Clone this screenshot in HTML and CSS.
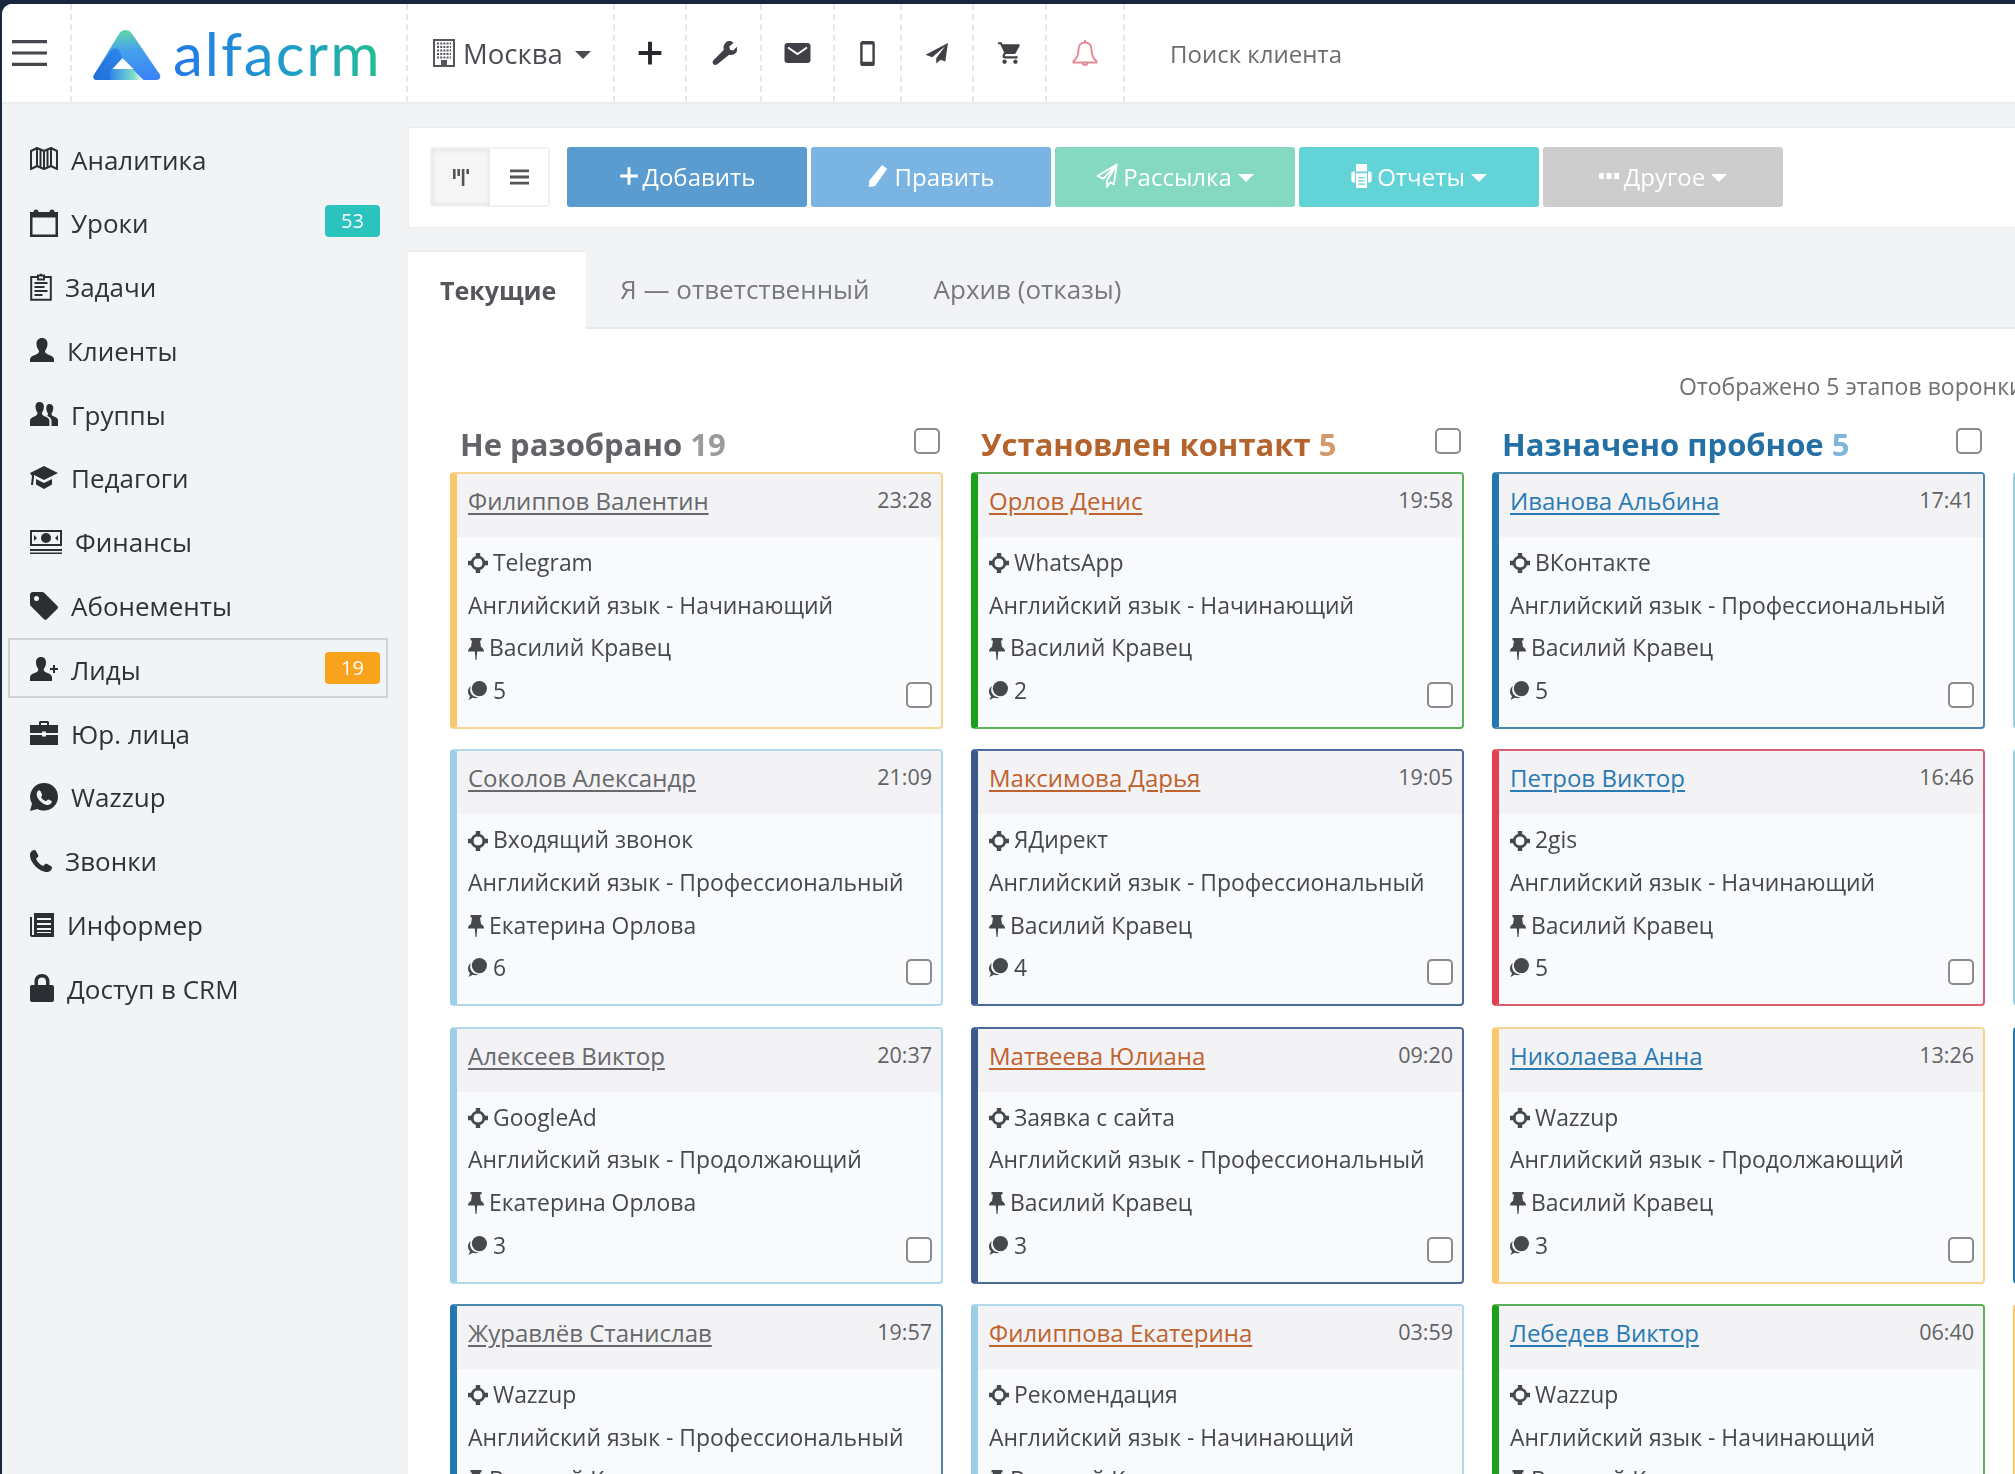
FILE: index.html
```html
<!DOCTYPE html>
<html lang="ru">
<head>
<meta charset="utf-8">
<title>alfacrm — Лиды</title>
<link rel="stylesheet" href="styles.css">
</head>
<body>
<svg class="sprite" aria-hidden="true">
<defs>
<symbol id="i-plus" viewBox="0 0 24 24"><path d="M10.2 1.5h3.6v8.7h8.7v3.6h-8.7v8.7h-3.6v-8.7H1.5v-3.6h8.7z"/></symbol>
<symbol id="i-wrench" viewBox="0 0 24 24"><path d="M15.6 1.2c2.1-.6 4.300 0 5.700 1.300l-3.900 3.600.6 3 2.900.6 3.700-3.700c.7 2.400.1 4.700-1.600 6.300-1.700 1.500-3.800 1.900-5.800 1.200L6.300 22.300c-1 1-2.600 1-3.600.1-1-1-1-2.600 0-3.600l9.700-9.800c-.8-2-.4-4.300 1.100-5.900.6-.9 1.300-1.600 2.100-1.900z"/></symbol>
<symbol id="i-mail" viewBox="0 0 26 20"><rect width="26" height="20" rx="3"/><path d="M3.500 4.500 13 11l9.500-6.500" fill="none" stroke="#fff" stroke-width="2"/></symbol>
<symbol id="i-mobile" viewBox="0 0 14 24"><path fill-rule="evenodd" d="M2.500 0h9A2.500 2.500 0 0 1 14 2.500v19a2.500 2.500 0 0 1-2.500 2.500h-9A2.500 2.500 0 0 1 0 21.500v-19A2.500 2.500 0 0 1 2.500 0zM2.300 3.300v16.500h9.400V3.300z"/></symbol>
<symbol id="i-send" viewBox="0 0 24 22"><path d="M23.500 0 0 12.200l7 2.600L20.500 3.500 11.200 16l0 5.500 4.500-4 5 2z"/></symbol>
<symbol id="i-cart" viewBox="0 0 24 24"><path d="M7 18c-1.100 0-2 .9-2 2s.9 2 2 2 2-.9 2-2-.9-2-2-2zM1 2v2h2l3.600 7.600-1.350 2.450c-.16.28-.25.61-.25.95 0 1.100.9 2 2 2h12v-2H7.420c-.14 0-.25-.11-.25-.25l.03-.12.9-1.630h7.450c.75 0 1.410-.41 1.750-1.030l3.580-6.490c.08-.14.12-.31.12-.48 0-.55-.45-1-1-1H5.210l-.94-2H1zm16 16c-1.100 0-2 .9-2 2s.9 2 2 2 2-.9 2-2-.9-2-2-2z"/></symbol>
<symbol id="i-bell" viewBox="0 0 26 28"><path d="M13 3.500c-4 0-6.500 3-6.500 7 0 6-1.500 9-5 11.500v1.500h23V22c-3.500-2.500-5-5.500-5-11.500 0-4-2.500-7-6.500-7zM13 1v2.500M10.500 23.500c0 3.500 5 3.500 5 0" fill="none" stroke="currentColor" stroke-width="1.900"/></symbol>
<symbol id="i-building" viewBox="0 0 22 28"><path fill-rule="evenodd" d="M0 0h22v28H0zM2 2v24h6v-5h6v5h6V2z"/><path d="M4 4.500h14M4 8h14M4 11.500h14M4 15h14M4 18.500h14" fill="none" stroke="currentColor" stroke-width="2" stroke-dasharray="2 1.200"/></symbol>
<symbol id="i-map" viewBox="0 0 28 24"><path d="M1 22V4l6-3 7 3 7-3 6 3v18l-6-3-7 3-7-3zM7 1v18M10.500 3v18M14 4v18M17.500 3v18M21 1v18" fill="none" stroke="currentColor" stroke-width="2" stroke-linejoin="round"/></symbol>
<symbol id="i-calendar" viewBox="0 0 28 28"><path fill-rule="evenodd" d="M0 3h5V1h2v2h14V1h2v2h5v25H0zM2.500 8.500v17h23v-17z"/><circle cx="6" cy="3" r="2.500"/><circle cx="22" cy="3" r="2.500"/></symbol>
<symbol id="i-tasks" viewBox="0 0 22 28"><path d="M7 4H1.200v22.800h19.600V4H15M8 2.500h6v4H8zM11 .8v2" fill="none" stroke="currentColor" stroke-width="2"/><path d="M4.500 10h13M4.500 14h10M4.500 18h13M4.500 22h8" fill="none" stroke="currentColor" stroke-width="2"/></symbol>
<symbol id="i-user" viewBox="0 0 24 24"><path d="M12 0c3.700 0 5.500 2.500 5.500 5.800 0 3-1.200 5.500-2.500 7 0 2.300 1 3 4 4.200 3 1.100 5 2.200 5 4.500V24H0v-2.500c0-2.300 2-3.400 5-4.500 3-1.200 4-1.900 4-4.200-1.300-1.500-2.500-4-2.500-7C6.500 2.500 8.300 0 12 0z"/></symbol>
<symbol id="i-users" viewBox="0 0 28 24"><path d="M9.500 0c2.900 0 4.400 2 4.400 4.800 0 2.500-1 4.700-2 6 0 2 .8 2.600 3.200 3.600 2.400.9 4.300 2.200 4.300 4.200V24H0v-5.400c0-2 1.900-3.300 4.300-4.200 2.400-1 3.200-1.600 3.200-3.600-1-1.300-2-3.500-2-6C5.500 2 6.600 0 9.500 0z"/><path d="M19.500 2c2.500 0 3.800 1.700 3.800 4.200 0 2.200-.9 4-1.800 5.200 0 1.800.7 2.300 2.700 3.100 2.100.8 3.800 1.900 3.800 3.600V24h-6.500v-5c0-2.800-2-4-4.300-5 .6-.8.8-1.600.8-2.600-.9-1.300-1.700-3.100-1.700-5.200C16.300 3.700 17 2 19.500 2z"/></symbol>
<symbol id="i-grad" viewBox="0 0 28 24"><path d="M14 0l14 7-14 7L4 9v2l-1 8H1l1-9-2-3zM6 13l8 4 8-4v5.500L14 23l-8-4.500z"/></symbol>
<symbol id="i-money" viewBox="0 0 32 24"><path fill-rule="evenodd" d="M0 0h32v16H0zM2 2v12h28V2z"/><path d="M0 19h32v2H0zM0 22.500h32V24H0zM4 5l3 3-3 3zM28 5l-3 3 3 3z"/><circle cx="16" cy="8" r="5"/></symbol>
<symbol id="i-tag" viewBox="0 0 28 28"><path fill-rule="evenodd" d="M3 0h9c1 0 1.700.3 2.400 1l13 13c.8.800.8 2 0 2.800l-10.600 10.400c-.8.800-2 .8-2.800 0L1 14.200C.3 13.500 0 12.800 0 12V3c0-1.700 1.300-3 3-3zm3.500 4A2.500 2.500 0 1 0 6.500 9a2.500 2.500 0 0 0 0-5z"/></symbol>
<symbol id="i-useradd" viewBox="0 0 28 24"><path d="M11 0c3.500 0 5 2.400 5 5.500 0 2.800-1.100 5.200-2.300 6.600 0 2.200.9 2.900 3.700 4 2.900 1.100 4.600 2.100 4.600 4.400V24H0v-3.500c0-2.300 1.700-3.300 4.600-4.400 2.800-1.100 3.700-1.800 3.700-4C7.100 10.700 6 8.300 6 5.500 6 2.400 7.500 0 11 0zM23 8h2v3h3v2h-3v3h-2v-3h-3v-2h3z"/></symbol>
<symbol id="i-case" viewBox="0 0 28 24"><path d="M9 4V1.500C9 .7 9.700 0 10.500 0h7c.8 0 1.500.7 1.500 1.500V4h9v8H16v-1.500h-4V12H0V4zm2-2v2h6V2zM0 14h12v1.500h4V14h12v10H0z"/></symbol>
<symbol id="i-whatsapp" viewBox="0 0 28 28"><path fill-rule="evenodd" d="M14.200 0C22 0 28 6 28 13.800c0 7.700-6.200 13.800-13.800 13.800-2.400 0-4.700-.6-6.700-1.700L0 28l2-7.300A13.800 13.800 0 0 1 14.200 0zM9.800 7c-.6 0-1.200.2-1.800.9-.7.7-1.300 1.800-1.300 3.400 0 2.400 1.500 4.700 2.600 6 1.700 2.200 4.500 4 7.300 4.600 1.900.5 3.900-.4 4.800-1.800.4-.8.400-1.700.2-2-.2-.3-2.700-1.600-3.300-1.700-.5-.1-1.600 1.800-2.300 1.700-1-.2-2.900-1.100-4.600-3.400-.8-1.100.8-1.800.7-2.500-.1-.6-1.200-3.300-1.500-3.900-.2-.6-.8-.8-1.800-.8z"/></symbol>
<symbol id="i-phone" viewBox="0 0 22 22"><path d="M4.500 0c.6 0 1 .3 1.300.8l2.400 4.400c.3.600.2 1.200-.3 1.700L6 8.700c1 2.800 4.500 6.300 7.300 7.300l1.800-1.900c.5-.5 1.100-.6 1.700-.3l4.400 2.400c.5.300.8.700.8 1.300 0 2.500-2.500 4.500-5 4.500C9.300 22 0 12.700 0 5c0-2.500 2-5 4.500-5z"/></symbol>
<symbol id="i-list" viewBox="0 0 24 24"><path fill-rule="evenodd" d="M4 0h20v24H2c-1.100 0-2-.9-2-2V4h2v17.500c0 .4.500.5.500.5H4zm3 5v2h14V5zm0 5v2h14v-2zm0 5v2h14v-2zm0 4v1h14v-1z"/></symbol>
<symbol id="i-lock" viewBox="0 0 24 28"><path fill-rule="evenodd" d="M12 0c4.500 0 7.500 3 7.500 7.500V11H22c1.100 0 2 .9 2 2v13c0 1.100-.9 2-2 2H2c-1.100 0-2-.9-2-2V13c0-1.100.9-2 2-2h2.500V7.500C4.500 3 7.500 0 12 0zm0 3.500c-2.500 0-4 1.600-4 4V11h8V7.500c0-2.400-1.500-4-4-4z"/></symbol>
<symbol id="i-target" viewBox="0 0 20 20"><circle cx="10" cy="10" r="6" fill="none" stroke="currentColor" stroke-width="2.600"/><path d="M7.800 0h4.400v5.500H7.800zM7.800 14.500h4.400V20H7.800zM0 7.800h5.500v4.400H0zM14.500 7.800H20v4.400h-5.500z"/></symbol>
<symbol id="i-pin" viewBox="0 0 16 22"><path d="M2.500 0h11v2.500H12l1 6.500c2 1 3 2.500 3 4.500H9.200L8.500 22h-1l-.7-8.500H0C0 11.500 1 10 3 9l1-6.500H2.500z"/></symbol>
<symbol id="i-comments" viewBox="0 0 20 20"><circle cx="12" cy="8" r="8"/><path fill-rule="evenodd" d="M3.200 5C1.200 6.500 0 8.500 0 11c0 2 .8 3.800 2.200 5L.5 20l4.500-2.400c2 .7 4.300.6 6-.2-4.800-.3-8.500-3.500-8.700-7.400-.1-1.800.1-3.500.9-5z"/></symbol>
<symbol id="i-pencil" viewBox="0 0 20 24"><path d="M14.500 0 20 4 7 23l-7 1 .5-7z"/></symbol>
<symbol id="i-print" viewBox="0 0 22 26"><path fill-rule="evenodd" d="M5 0h12v8h3c1.100 0 2 .9 2 2v8c0 1.100-.9 2-2 2h-2V8H4v12H2c-1.100 0-2-.9-2-2v-8c0-1.100.9-2 2-2h3z"/><path fill-rule="evenodd" d="M5 10h12v16H5zM7.500 14v1.500h7V14zm0 3.500V19h7v-1.500zm0 3.500v1.500h7V21z"/></symbol>
<symbol id="i-dots" viewBox="0 0 20 6"><path d="M0 0h5v6H0zM7.500 0h5v6h-5zM15 0h5v6h-5z"/></symbol>
<symbol id="i-cols" viewBox="0 0 16 18"><path d="M0 1h2.600v10H0zM4.400 1H7v7H4.400zM8.800 1h2.600v17H8.800zM13.400 1H16v5h-2.600z"/></symbol>
<symbol id="i-lines" viewBox="0 0 20 16"><path d="M0 0h20v3H0zM0 6.500h20v3H0zM0 13h20v3H0z"/></symbol>
<symbol id="i-burger" viewBox="0 0 35 26"><path d="M0 0h35v3.200H0zM0 11.400h35v3.200H0zM0 22.800h35V26H0z"/></symbol>
<symbol id="i-send-o" viewBox="0 0 24 28"><path d="M22.500 1.500 1.500 14l6.500 3L22.500 1.500 12 19l0 7 3.500-5 4 2z" fill="none" stroke="currentColor" stroke-width="2" stroke-linejoin="round"/></symbol>
<linearGradient id="logo-a" x1="0.500" y1="0" x2="0.600" y2="1"><stop offset="0" stop-color="#62d6a6"/><stop offset="0.4" stop-color="#46a2ea"/><stop offset="1" stop-color="#3b82f6"/></linearGradient>
<linearGradient id="logo-b" x1="0" y1="1" x2="1" y2="0"><stop offset="0" stop-color="#1f6fd8"/><stop offset="1" stop-color="#2f86ea"/></linearGradient>
<linearGradient id="logo-c" x1="0" y1="0" x2="1" y2="0"><stop offset="0" stop-color="#2f86ea"/><stop offset="0.7" stop-color="#7adcc8"/><stop offset="1" stop-color="#ffffff"/></linearGradient>
</defs>
</svg>

<div class="app">
  <header class="topbar">
    <div class="cell cell-burger"><svg class="ico ico-burger"><use href="#i-burger"/></svg></div>
    <div class="cell cell-logo">
      <svg class="logo-mark" viewBox="0 0 67 50"><path d="M26 3c3-4 9-4 12 0l28 41c2 3 0 6-3 6H3c-3 0-4-3-2-6z" fill="url(#logo-a)"/><path d="M1 44 17 21c4-5 9-3 12 7L19 39c-3 3-4 7-1 11H3c-3 0-4-3-2-6z" fill="url(#logo-b)"/><path d="M19 39h20l11 11H18c-3-4-2-8 1-11z" fill="url(#logo-c)"/><path d="M29 28 40 39H19z" fill="#fff"/></svg>
      <span class="logo-text">alfacrm</span>
    </div>
    <div class="cell cell-city"><svg class="ico ico-building"><use href="#i-building"/></svg><span class="city-name">Москва</span><span class="caret caret-dark"></span></div>
    <div class="cell cell-plus"><svg class="ico ico-plus"><use href="#i-plus"/></svg></div>
    <div class="cell cell-wrench"><svg class="ico ico-wrench"><use href="#i-wrench"/></svg></div>
    <div class="cell cell-mail"><svg class="ico ico-mail"><use href="#i-mail"/></svg></div>
    <div class="cell cell-mobile"><svg class="ico ico-mobile"><use href="#i-mobile"/></svg></div>
    <div class="cell cell-send"><svg class="ico ico-send"><use href="#i-send"/></svg></div>
    <div class="cell cell-cart"><svg class="ico ico-cart"><use href="#i-cart"/></svg></div>
    <div class="cell cell-bell"><svg class="ico ico-bell"><use href="#i-bell"/></svg></div>
    <div class="search">Поиск клиента</div>
  </header>

  <div class="layout">
    <nav class="sidebar">
      <a class="nav-item"><svg class="ico nav-ico w28"><use href="#i-map"/></svg><span class="nav-label">Аналитика</span></a>
      <a class="nav-item"><svg class="ico nav-ico w28"><use href="#i-calendar"/></svg><span class="nav-label">Уроки</span><span class="badge badge-teal">53</span></a>
      <a class="nav-item"><svg class="ico nav-ico w22"><use href="#i-tasks"/></svg><span class="nav-label">Задачи</span></a>
      <a class="nav-item"><svg class="ico nav-ico w24"><use href="#i-user"/></svg><span class="nav-label">Клиенты</span></a>
      <a class="nav-item"><svg class="ico nav-ico w28"><use href="#i-users"/></svg><span class="nav-label">Группы</span></a>
      <a class="nav-item"><svg class="ico nav-ico w28"><use href="#i-grad"/></svg><span class="nav-label">Педагоги</span></a>
      <a class="nav-item"><svg class="ico nav-ico w32"><use href="#i-money"/></svg><span class="nav-label">Финансы</span></a>
      <a class="nav-item"><svg class="ico nav-ico w28"><use href="#i-tag"/></svg><span class="nav-label">Абонементы</span></a>
      <a class="nav-item nav-active"><svg class="ico nav-ico w28"><use href="#i-useradd"/></svg><span class="nav-label">Лиды</span><span class="badge badge-orange">19</span></a>
      <a class="nav-item"><svg class="ico nav-ico w28"><use href="#i-case"/></svg><span class="nav-label">Юр. лица</span></a>
      <a class="nav-item"><svg class="ico nav-ico w28"><use href="#i-whatsapp"/></svg><span class="nav-label">Wazzup</span></a>
      <a class="nav-item"><svg class="ico nav-ico w22"><use href="#i-phone"/></svg><span class="nav-label">Звонки</span></a>
      <a class="nav-item"><svg class="ico nav-ico w24"><use href="#i-list"/></svg><span class="nav-label">Информер</span></a>
      <a class="nav-item"><svg class="ico nav-ico w24"><use href="#i-lock"/></svg><span class="nav-label">Доступ в CRM</span></a>
    </nav>

    <main class="main">
      <section class="toolbar">
        <div class="view-toggle">
          <span class="view-btn view-active"><svg class="ico ico-cols"><use href="#i-cols"/></svg></span>
          <span class="view-btn"><svg class="ico ico-lines"><use href="#i-lines"/></svg></span>
        </div>
        <div class="actions">
          <a class="btn btn-add"><svg class="ico btn-ico-plus"><use href="#i-plus"/></svg>Добавить</a>
          <a class="btn btn-edit"><svg class="ico btn-ico-pencil"><use href="#i-pencil"/></svg>Править</a>
          <a class="btn btn-mail"><svg class="ico btn-ico-send"><use href="#i-send-o"/></svg>Рассылка<span class="caret"></span></a>
          <a class="btn btn-report"><svg class="ico btn-ico-print"><use href="#i-print"/></svg>Отчеты<span class="caret"></span></a>
          <a class="btn btn-other"><svg class="ico btn-ico-dots"><use href="#i-dots"/></svg>Другое<span class="caret"></span></a>
        </div>
      </section>

      <div class="tabs">
        <a class="tab tab-active">Текущие</a>
        <a class="tab tab-second">Я — ответственный</a>
        <a class="tab">Архив (отказы)</a>
      </div>

      <section class="content">
        <p class="funnel-note">Отображено 5 этапов воронки</p>
        <div class="board">

          <div class="column col-gray">
            <div class="col-head"><h2 class="col-title">Не разобрано <span class="col-count">19</span></h2><span class="check"></span></div>
            <article class="card c-yellow">
              <div class="card-head"><a class="card-name">Филиппов Валентин</a><time class="card-time">23:28</time></div>
              <div class="card-body">
                <p class="card-line"><svg class="ico ico-target"><use href="#i-target"/></svg>Telegram</p>
                <p class="card-line">Английский язык - Начинающий</p>
                <p class="card-line"><svg class="ico ico-pin"><use href="#i-pin"/></svg>Василий Кравец</p>
                <div class="card-foot"><p class="card-line"><svg class="ico ico-comments"><use href="#i-comments"/></svg>5</p><span class="check check-card"></span></div>
              </div>
            </article>
            <article class="card c-sky">
              <div class="card-head"><a class="card-name">Соколов Александр</a><time class="card-time">21:09</time></div>
              <div class="card-body">
                <p class="card-line"><svg class="ico ico-target"><use href="#i-target"/></svg>Входящий звонок</p>
                <p class="card-line">Английский язык - Профессиональный</p>
                <p class="card-line"><svg class="ico ico-pin"><use href="#i-pin"/></svg>Екатерина Орлова</p>
                <div class="card-foot"><p class="card-line"><svg class="ico ico-comments"><use href="#i-comments"/></svg>6</p><span class="check check-card"></span></div>
              </div>
            </article>
            <article class="card c-sky">
              <div class="card-head"><a class="card-name">Алексеев Виктор</a><time class="card-time">20:37</time></div>
              <div class="card-body">
                <p class="card-line"><svg class="ico ico-target"><use href="#i-target"/></svg>GoogleAd</p>
                <p class="card-line">Английский язык - Продолжающий</p>
                <p class="card-line"><svg class="ico ico-pin"><use href="#i-pin"/></svg>Екатерина Орлова</p>
                <div class="card-foot"><p class="card-line"><svg class="ico ico-comments"><use href="#i-comments"/></svg>3</p><span class="check check-card"></span></div>
              </div>
            </article>
            <article class="card c-blue">
              <div class="card-head"><a class="card-name">Журавлёв Станислав</a><time class="card-time">19:57</time></div>
              <div class="card-body">
                <p class="card-line"><svg class="ico ico-target"><use href="#i-target"/></svg>Wazzup</p>
                <p class="card-line">Английский язык - Профессиональный</p>
                <p class="card-line"><svg class="ico ico-pin"><use href="#i-pin"/></svg>Василий Кравец</p>
              </div>
            </article>
          </div>

          <div class="column col-orange">
            <div class="col-head"><h2 class="col-title">Установлен контакт <span class="col-count">5</span></h2><span class="check"></span></div>
            <article class="card c-green">
              <div class="card-head"><a class="card-name">Орлов Денис</a><time class="card-time">19:58</time></div>
              <div class="card-body">
                <p class="card-line"><svg class="ico ico-target"><use href="#i-target"/></svg>WhatsApp</p>
                <p class="card-line">Английский язык - Начинающий</p>
                <p class="card-line"><svg class="ico ico-pin"><use href="#i-pin"/></svg>Василий Кравец</p>
                <div class="card-foot"><p class="card-line"><svg class="ico ico-comments"><use href="#i-comments"/></svg>2</p><span class="check check-card"></span></div>
              </div>
            </article>
            <article class="card c-navy">
              <div class="card-head"><a class="card-name">Максимова Дарья</a><time class="card-time">19:05</time></div>
              <div class="card-body">
                <p class="card-line"><svg class="ico ico-target"><use href="#i-target"/></svg>ЯДирект</p>
                <p class="card-line">Английский язык - Профессиональный</p>
                <p class="card-line"><svg class="ico ico-pin"><use href="#i-pin"/></svg>Василий Кравец</p>
                <div class="card-foot"><p class="card-line"><svg class="ico ico-comments"><use href="#i-comments"/></svg>4</p><span class="check check-card"></span></div>
              </div>
            </article>
            <article class="card c-navy">
              <div class="card-head"><a class="card-name">Матвеева Юлиана</a><time class="card-time">09:20</time></div>
              <div class="card-body">
                <p class="card-line"><svg class="ico ico-target"><use href="#i-target"/></svg>Заявка с сайта</p>
                <p class="card-line">Английский язык - Профессиональный</p>
                <p class="card-line"><svg class="ico ico-pin"><use href="#i-pin"/></svg>Василий Кравец</p>
                <div class="card-foot"><p class="card-line"><svg class="ico ico-comments"><use href="#i-comments"/></svg>3</p><span class="check check-card"></span></div>
              </div>
            </article>
            <article class="card c-sky">
              <div class="card-head"><a class="card-name">Филиппова Екатерина</a><time class="card-time">03:59</time></div>
              <div class="card-body">
                <p class="card-line"><svg class="ico ico-target"><use href="#i-target"/></svg>Рекомендация</p>
                <p class="card-line">Английский язык - Начинающий</p>
                <p class="card-line"><svg class="ico ico-pin"><use href="#i-pin"/></svg>Василий Кравец</p>
              </div>
            </article>
          </div>

          <div class="column col-blue">
            <div class="col-head"><h2 class="col-title">Назначено пробное <span class="col-count">5</span></h2><span class="check"></span></div>
            <article class="card c-blue">
              <div class="card-head"><a class="card-name">Иванова Альбина</a><time class="card-time">17:41</time></div>
              <div class="card-body">
                <p class="card-line"><svg class="ico ico-target"><use href="#i-target"/></svg>ВКонтакте</p>
                <p class="card-line">Английский язык - Профессиональный</p>
                <p class="card-line"><svg class="ico ico-pin"><use href="#i-pin"/></svg>Василий Кравец</p>
                <div class="card-foot"><p class="card-line"><svg class="ico ico-comments"><use href="#i-comments"/></svg>5</p><span class="check check-card"></span></div>
              </div>
            </article>
            <article class="card c-red">
              <div class="card-head"><a class="card-name">Петров Виктор</a><time class="card-time">16:46</time></div>
              <div class="card-body">
                <p class="card-line"><svg class="ico ico-target"><use href="#i-target"/></svg>2gis</p>
                <p class="card-line">Английский язык - Начинающий</p>
                <p class="card-line"><svg class="ico ico-pin"><use href="#i-pin"/></svg>Василий Кравец</p>
                <div class="card-foot"><p class="card-line"><svg class="ico ico-comments"><use href="#i-comments"/></svg>5</p><span class="check check-card"></span></div>
              </div>
            </article>
            <article class="card c-yellow">
              <div class="card-head"><a class="card-name">Николаева Анна</a><time class="card-time">13:26</time></div>
              <div class="card-body">
                <p class="card-line"><svg class="ico ico-target"><use href="#i-target"/></svg>Wazzup</p>
                <p class="card-line">Английский язык - Продолжающий</p>
                <p class="card-line"><svg class="ico ico-pin"><use href="#i-pin"/></svg>Василий Кравец</p>
                <div class="card-foot"><p class="card-line"><svg class="ico ico-comments"><use href="#i-comments"/></svg>3</p><span class="check check-card"></span></div>
              </div>
            </article>
            <article class="card c-green">
              <div class="card-head"><a class="card-name">Лебедев Виктор</a><time class="card-time">06:40</time></div>
              <div class="card-body">
                <p class="card-line"><svg class="ico ico-target"><use href="#i-target"/></svg>Wazzup</p>
                <p class="card-line">Английский язык - Начинающий</p>
                <p class="card-line"><svg class="ico ico-pin"><use href="#i-pin"/></svg>Василий Кравец</p>
              </div>
            </article>
          </div>

          <div class="column">
            <div class="col-head"></div>
            <article class="card c-sky"></article>
            <article class="card c-sky"></article>
            <article class="card c-blue"></article>
            <article class="card c-yellow"></article>
          </div>

        </div>
      </section>
    </main>
  </div>
</div>
</body>
</html>
```

FILE: styles.css
```css
* { box-sizing: border-box; }
html, body { margin: 0; height: 100%; }
body {
  background: #1a2540;
  font-family: "Open Sans", "Noto Sans", sans-serif;
  color: #444;
  overflow: hidden;
  width: 2015px;
  height: 1474px;
}
.sprite { width: 0; height: 0; position: absolute; }
p, h2 { margin: 0; }
.ico { fill: currentColor; display: block; flex: none; }

.app {
  margin: 4px 0 0 2px;
  height: 1470px;
  background: #f2f3f5;
  border-top-left-radius: 10px;
  overflow: hidden;
  filter: blur(0.4px);
}

/* top bar */
.topbar {
  display: flex;
  height: 100px;
  background: #fff;
  border-bottom: 2px solid #e9eaec;
  color: #3f4147;
}
.cell {
  display: flex;
  align-items: center;
  justify-content: center;
  border-right: 2px dashed #e6e7ea;
  height: 100%;
}
.cell-burger { width: 70px; padding-right: 14px; }
.ico-burger { width: 35px; height: 26px; color: #45474c; }
.cell-logo { width: 336px; justify-content: flex-start; padding-left: 21px; }
.logo-mark { width: 68px; height: 50px; flex: none; margin-top: 4px; }
.logo-text {
  font-family: "Lato", sans-serif;
  font-size: 60px;
  line-height: 60px;
  letter-spacing: 2px;
  margin-left: 12px;
  background: linear-gradient(90deg, #2478e6 0%, #1f9fc8 60%, #22bf8f 100%);
  -webkit-background-clip: text;
  background-clip: text;
  color: transparent;
}
.cell-city { width: 207px; justify-content: flex-start; padding-left: 25px; }
.ico-building { width: 22px; height: 28px; color: #55575c; }
.city-name { font-size: 27.500px; margin-left: 8px; color: #4a4c52; }
.caret {
  display: inline-block;
  width: 0;
  height: 0;
  border-left: 8px solid transparent;
  border-right: 8px solid transparent;
  border-top: 8px solid currentColor;
  margin-left: 8px;
}
.caret-dark { margin-left: 12px; margin-top: 4px; color: #4a4c52; }
.cell-plus { width: 72px; }
.ico-plus { width: 26px; height: 26px; color: #26282d; }
.cell-wrench { width: 75px; }
.ico-wrench { width: 27px; height: 26px; }
.cell-mail { width: 73px; }
.ico-mail { width: 27px; height: 20px; }
.cell-mobile { width: 67px; }
.ico-mobile { width: 15px; height: 25px; }
.cell-send { width: 72px; }
.ico-send { width: 24px; height: 21px; }
.cell-cart { width: 73px; }
.ico-cart { width: 26px; height: 26px; }
.cell-bell { width: 78px; }
.ico-bell { width: 26px; height: 28px; color: #e58a94; fill: none; }
.search { padding-left: 45px; font-size: 24px; line-height: 100px; color: #6a6c70; }

/* layout */
.layout { display: flex; }
.sidebar {
  width: 406px;
  flex: none;
  padding: 23.500px 0 0 6px;
  display: flex;
  flex-direction: column;
  gap: 3.800px;
}
.nav-item {
  display: flex;
  align-items: center;
  width: 380px;
  height: 60px;
  padding: 0 6px 0 20px;
  border: 2px solid transparent;
  color: #2f3237;
  font-size: 26px;
}
.nav-active { border-color: #cfd0d3; }
.nav-ico { height: 28px; color: #2b2e33; margin-right: 13px; margin-top: 3px; }
.w22 { width: 22px; }
.w24 { width: 24px; }
.w28 { width: 28px; }
.w32 { width: 32px; }
.nav-label { padding-top: 4px; }
.badge {
  margin-left: auto;
  width: 55px;
  height: 32px;
  border-radius: 4px;
  color: #fff;
  font-size: 20px;
  line-height: 32px;
  text-align: center;
}
.badge-teal { background: #2bc3be; }
.badge-orange { background: #f9a21c; }

/* toolbar */
.main { flex: 1; min-width: 0; }
.toolbar {
  margin-top: 23px;
  height: 101px;
  background: #fff;
  border: 1px solid #ebecee;
  border-right: 0;
  padding: 19px 0 0 21px;
  display: flex;
  gap: 17px;
}
.view-toggle { display: flex; width: 120px; height: 60px; border: 2px solid #f0f1f2; border-radius: 3px; }
.view-btn { flex: 1; display: flex; align-items: center; justify-content: center; color: #555; }
.view-active { background: #f6f6f6; box-shadow: inset 0 0 6px rgba(0, 0, 0, .1); }
.ico-cols { width: 16px; height: 18px; }
.ico-lines { width: 19px; height: 16px; }
.actions { display: flex; gap: 4px; }
.btn {
  width: 240px;
  height: 60px;
  padding-bottom: 2px;
  border-radius: 3px;
  color: #fff;
  font-size: 24px;
  display: flex;
  align-items: center;
  justify-content: center;
}
.btn .caret { color: #fff; margin-left: 6px; margin-top: 3px; }
.btn-add { background: #5a9bd0; }
.btn-edit { background: #7ab4e3; }
.btn-mail { background: #85d9c0; }
.btn-report { background: #62d3d6; }
.btn-other { background: #cdcdcd; }
.btn-ico-plus { width: 20px; height: 20px; margin-right: 4px; }
.btn-ico-pencil { width: 20px; height: 22px; margin-right: 7px; }
.btn-ico-send { width: 22px; height: 26px; margin-right: 5px; }
.btn-ico-print { width: 21px; height: 24px; margin-right: 5px; }
.btn-ico-dots { width: 20px; height: 6px; margin-right: 5px; }

/* tabs */
.tabs {
  margin-top: 23px;
  height: 78px;
  display: flex;
  align-items: stretch;
  border-bottom: 2px solid #e7e8ea;
  font-size: 26px;
  color: #78797d;
}
.tab { padding: 0 32px; line-height: 76px; }
.tab-active {
  background: #fff;
  color: #54565b;
  font-size: 25px;
  font-weight: 700;
  height: 78px;
  padding-right: 30px;
  border-top: 1px solid #ebecee;
}
.tab-second { margin-left: 2px; }

/* board */
.content { background: #fff; height: 1200px; padding-top: 42px; overflow: hidden; }
.funnel-note { margin-left: 1271px; font-size: 23px; line-height: 30px; color: #6e7074; white-space: nowrap; }
.board {
  margin: 25px 0 0 42px;
  display: grid;
  grid-template-columns: repeat(4, 493px);
  column-gap: 28px;
}
.column { display: flex; flex-direction: column; gap: 20.300px; }
.col-head {
  height: 46px;
  margin-bottom: -20.300px;
  display: flex;
  justify-content: space-between;
  align-items: flex-start;
  padding: 2px 3px 0 10px;
}
.col-title { font-size: 31px; line-height: 40px; font-weight: 700; margin-top: -4px; }
.col-gray .col-title { color: #626468; }
.col-gray .col-count { color: #9a9b9e; }
.col-orange .col-title { color: #b5632c; }
.col-orange .col-count { color: #d49a6c; }
.col-blue .col-title { color: #2470a5; }
.col-blue .col-count { color: #7fb5da; }
.check {
  width: 26px;
  height: 26px;
  flex: none;
  border: 2px solid #8a8b8e;
  border-radius: 5px;
  background: #fff;
}
.card {
  height: 257px;
  border: 2px solid var(--edge);
  border-left: 7px solid var(--bar);
  border-radius: 4px;
  background: #f9fafc;
  font-size: 22.900px;
  color: #46484d;
  overflow: hidden;
  flex: none;
}
.c-yellow { --bar: #fac86c; --edge: #f6d593; }
.c-sky { --bar: #9bcfe8; --edge: #b1d8ec; }
.c-blue { --bar: #2277b0; --edge: #4c86ad; }
.c-green { --bar: #1aa01a; --edge: #5cb05c; }
.c-navy { --bar: #3a5a8c; --edge: #4b6a99; }
.c-red { --bar: #e43f50; --edge: #d66070; }
.card-head {
  height: 63px;
  background: #f3f3f5;
  padding: 12px 9px 0 11px;
  display: flex;
  justify-content: space-between;
  align-items: flex-start;
}
.card-name { font-size: 24px; text-decoration: underline; text-underline-offset: 3px; line-height: 30px; }
.c-yellow .card-name, .c-sky .card-name, .c-blue .card-name { color: #66686c; }
.col-orange .card-name { color: #c0622e; }
.col-blue .card-name { color: #2a7ab4; }
.card-time { font-size: 21.500px; line-height: 30px; margin-top: -1px; color: #606266; }
.card-body { padding: 5px 9px 0 11px; }
.card-line { display: flex; align-items: center; line-height: 42.700px; height: 42.700px; }
.ico-target { width: 20px; height: 20px; margin-right: 5px; }
.ico-pin { width: 16px; height: 22px; margin-right: 5px; }
.ico-comments { width: 19px; height: 19px; margin-right: 6px; margin-top: -2px; }
.card-foot { display: flex; justify-content: space-between; align-items: flex-start; }
.check-card { margin-top: 12px; }
```
